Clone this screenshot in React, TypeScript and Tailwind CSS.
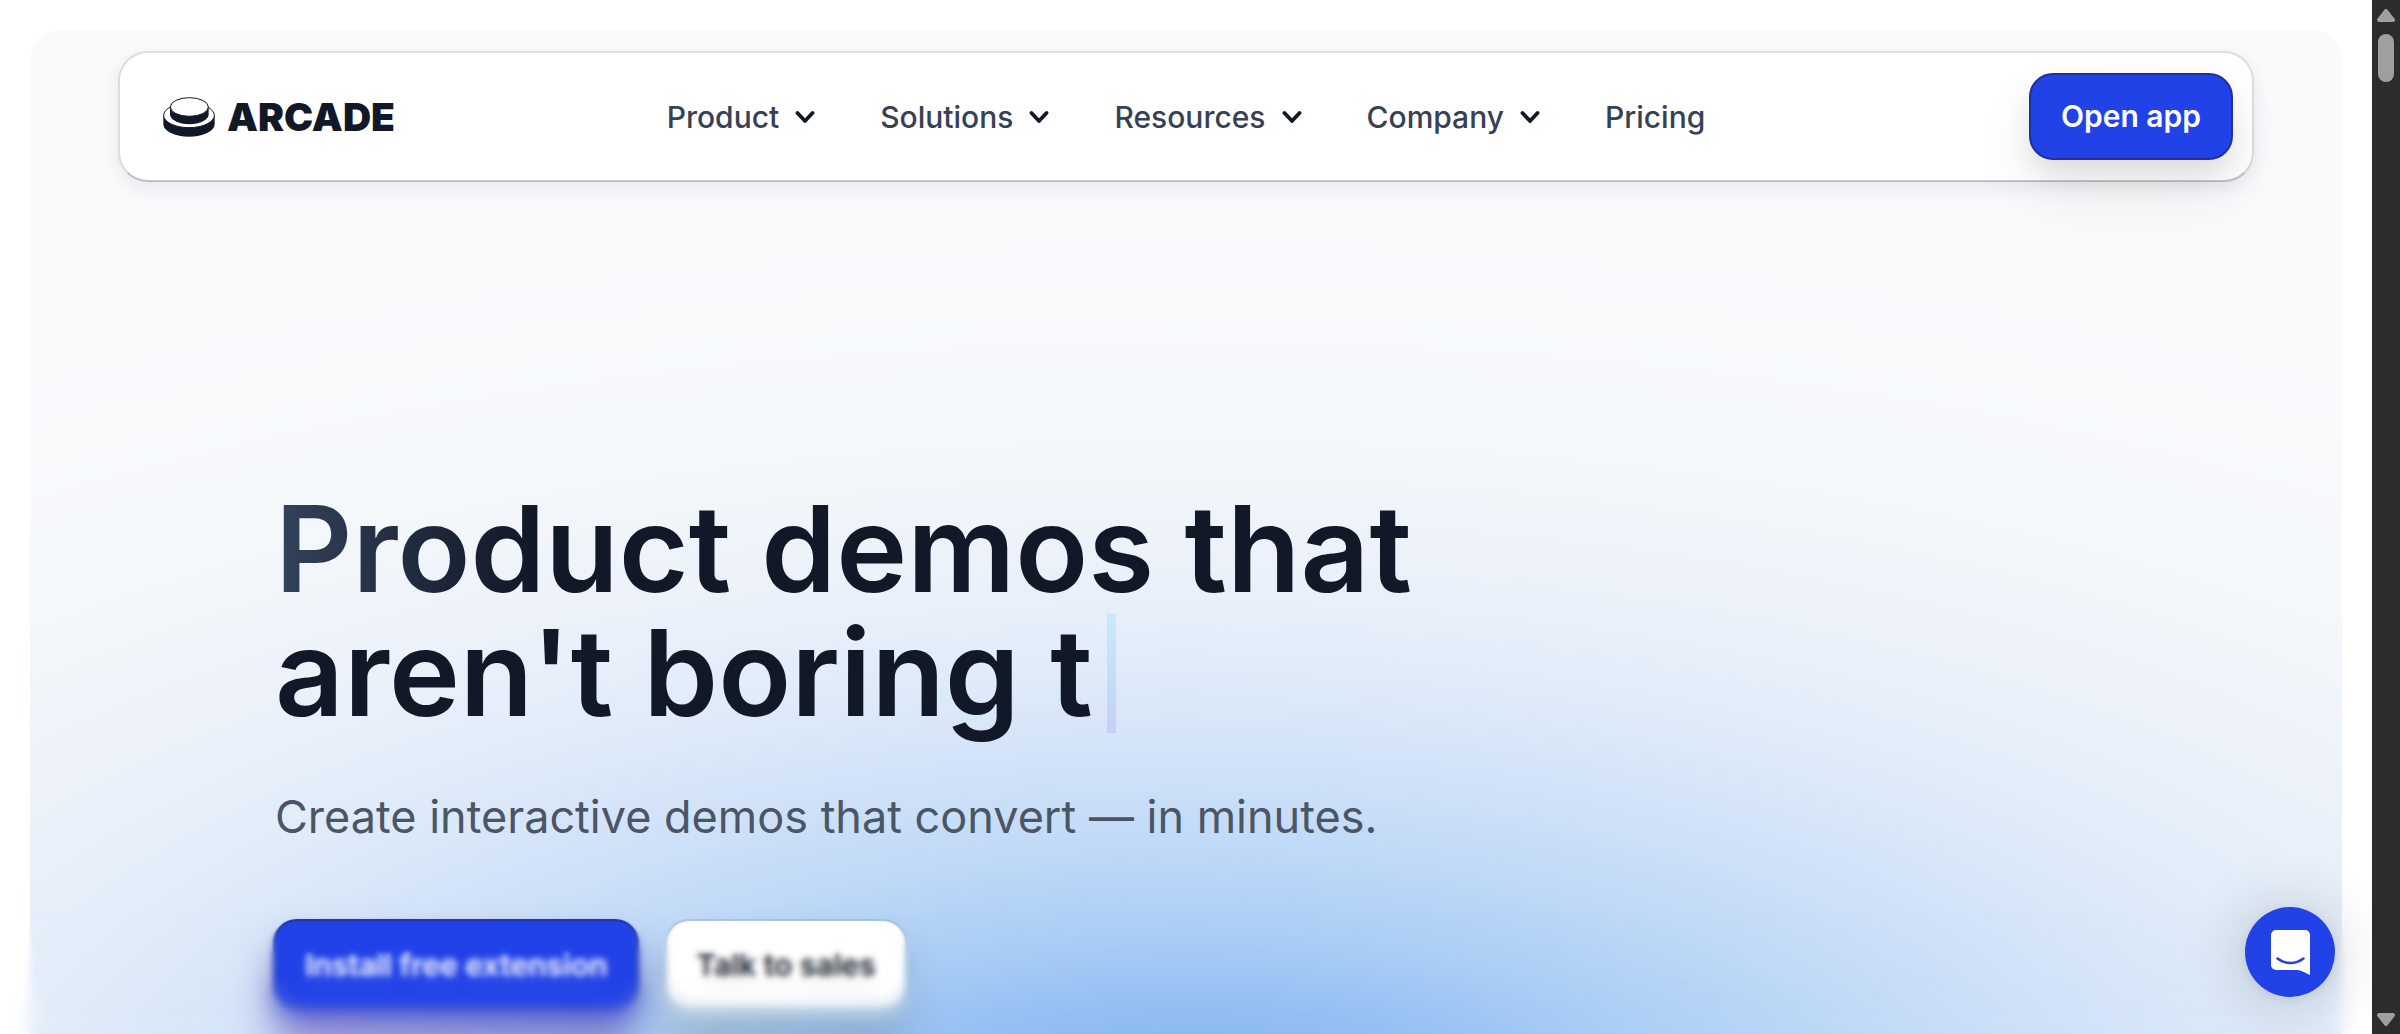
import { useState } from 'react'

interface NavItem {
  label: string
  hasMenu: boolean
}

const navItems: NavItem[] = [
  { label: 'Product', hasMenu: true },
  { label: 'Solutions', hasMenu: true },
  { label: 'Resources', hasMenu: true },
  { label: 'Company', hasMenu: true },
  { label: 'Pricing', hasMenu: false },
]

function LogoMark() {
  return (
    <svg viewBox="0 0 156 120" className="h-[40px] w-[52px]" aria-hidden="true">
      <path d="M1 55V82A77 37 0 0 0 155 82V55Z" fill="#111827" />
      <ellipse cx="78" cy="55" rx="76" ry="37" fill="#fff" stroke="#111827" strokeWidth="3" />
      <path d="M21 29V52A57 29 0 0 0 137 52V29Z" fill="#111827" />
      <ellipse cx="79" cy="30" rx="57" ry="28" fill="#fff" stroke="#111827" strokeWidth="3" />
    </svg>
  )
}

function Chevron() {
  return (
    <svg viewBox="0 0 20 20" className="h-5 w-5" fill="none" aria-hidden="true">
      <path d="M2.500 6l7.500 8 7.500-8" stroke="#111827" strokeWidth="3.800" strokeLinecap="round" strokeLinejoin="round" />
    </svg>
  )
}

function Navbar() {
  const [openMenu, setOpenMenu] = useState<string | null>(null)

  return (
    <header className="relative z-10 mx-[88px] mt-[21px] grid grid-cols-[1fr_auto_1fr] items-center rounded-[30px] border-2 border-black/10 border-b-black/20 bg-white bg-clip-padding px-[19px] py-5 shadow-[0_6px_18px_rgba(17,24,39,0.08)]">
      <a href="#" className="flex items-center gap-3 pl-6 text-[#111827]">
        <LogoMark />
        <span className="text-[39px] leading-[48px] font-black">ARCADE</span>
      </a>

      <nav className="flex items-center gap-[65px] text-[30px] leading-[44px] font-medium text-gray-700">
        {navItems.map((item) =>
          item.hasMenu ? (
            <button
              key={item.label}
              aria-expanded={openMenu === item.label}
              onClick={() => setOpenMenu(openMenu === item.label ? null : item.label)}
              className="flex items-center gap-4"
            >
              {item.label}
              <Chevron />
            </button>
          ) : (
            <a key={item.label} href="#">
              {item.label}
            </a>
          )
        )}
      </nav>

      <button className="h-[87px] justify-self-end rounded-[24px] border-2 border-[#1e2f9e] bg-[#2142e7] px-[30px] text-[30px] font-semibold text-white shadow-[0_30px_60px_rgba(0,0,0,0.08),0_12px_24px_rgba(0,0,0,0.08)]">
        Open app
      </button>
    </header>
  )
}

function Hero() {
  return (
    <section className="relative z-10 px-[243px] pt-[305px]">
      <h1 className="pl-0.5 text-[120px] leading-[124px] font-semibold text-[#111827]">
        <span className="block bg-linear-to-r from-[#34425c] to-[#111827] to-[260px] bg-clip-text text-transparent">
          Product demos that
        </span>
        <span className="flex items-center gap-[14px]">
          aren't boring t
          <span className="h-[120px] w-[9px] bg-linear-to-b from-[#cbe9fa] to-[#c2d1f6]" />
        </span>
      </h1>
      <p className="mt-12 pl-0.5 text-[45px] leading-[68px] text-gray-600">
        Create interactive demos that convert — in minutes.
      </p>
      <div className="mt-[68px] flex gap-[26px] text-[30px] font-semibold">
        <button className="h-[92px] rounded-[24px] border-2 border-[#1e2f9e] bg-[#2142e7] px-[30px] text-white shadow-[0_28px_36px_rgba(60,40,170,0.55)]">
          Install free extension
        </button>
        <button className="h-[92px] rounded-[24px] border-2 border-black/10 bg-white bg-clip-padding px-[29px] text-[#111827] shadow-[0_28px_36px_rgba(90,110,120,0.30)]">
          Talk to sales
        </button>
      </div>
    </section>
  )
}

// Blur that gets stronger towards the bottom of the viewport
function BottomBlur() {
  return (
    <div className="pointer-events-none absolute inset-x-0 bottom-0 z-20 h-[118px]">
      <div className="absolute inset-0 backdrop-blur-[1px] mask-[linear-gradient(transparent,black_15%)]" />
      <div className="absolute inset-0 backdrop-blur-[3px] mask-[linear-gradient(transparent_10%,black_35%)]" />
      <div className="absolute inset-0 backdrop-blur-[10px] mask-[linear-gradient(transparent_50%,black_85%)]" />
    </div>
  )
}

function ChatButton() {
  return (
    <button
      aria-label="Open chat"
      className="absolute right-[37px] bottom-[37px] z-30 flex h-[90px] w-[90px] items-center justify-center rounded-full bg-[#2142e7] shadow-[0_2px_12px_rgba(0,0,0,0.08),0_4px_64px_rgba(0,0,0,0.20)]"
    >
      <svg viewBox="0 0 39 45" className="h-[45px] w-[39px]" aria-hidden="true">
        <path d="M5 0h29a5 5 0 0 1 5 5v40c-4-1.500-7-4-12-5H5a5 5 0 0 1-5-5V5a5 5 0 0 1 5-5z" fill="#fff" />
        <path d="M6.500 28.500c8 6 18 6 26 0" fill="none" stroke="#2142e7" strokeWidth="2.600" strokeLinecap="round" />
      </svg>
    </button>
  )
}

function Scrollbar() {
  return (
    <div className="flex w-7 shrink-0 flex-col items-center bg-[#2c2c2c] pt-[9px] pb-2" aria-hidden="true">
      <svg viewBox="0 0 18 13" className="h-[13px] w-[18px]">
        <path d="M9 2L16 11H2Z" fill="#9f9f9f" stroke="#9f9f9f" strokeWidth="4" strokeLinejoin="round" />
      </svg>
      <div className="mt-3 h-12 w-4 rounded-full bg-[#9f9f9f]" />
      <svg viewBox="0 0 18 13" className="mt-auto h-[13px] w-[18px]">
        <path d="M9 11L2 2H16Z" fill="#9f9f9f" stroke="#9f9f9f" strokeWidth="4" strokeLinejoin="round" />
      </svg>
    </div>
  )
}

export default function App() {
  return (
    <div className="flex h-screen overflow-hidden bg-white font-[Inter,sans-serif]">
      <main className="relative flex min-w-0 flex-1 flex-col overflow-hidden px-[30px] pt-[30px]">
        <div className="flow-root flex-1 rounded-t-[30px] bg-[radial-gradient(ellipse_2400px_1000px_at_50%_1120px,#7fb0f0_0%,#8ab8f2_11%,#a8cdf5_21%,#c1daf7_31%,#d3e3f8_40%,#e2edf9_50%,#edf2fa_60%,#f4f8fb_72%,#f9fafc_91%)]">
          <Navbar />
          <Hero />
        </div>
        <BottomBlur />
        <ChatButton />
      </main>
      <Scrollbar />
    </div>
  )
}
